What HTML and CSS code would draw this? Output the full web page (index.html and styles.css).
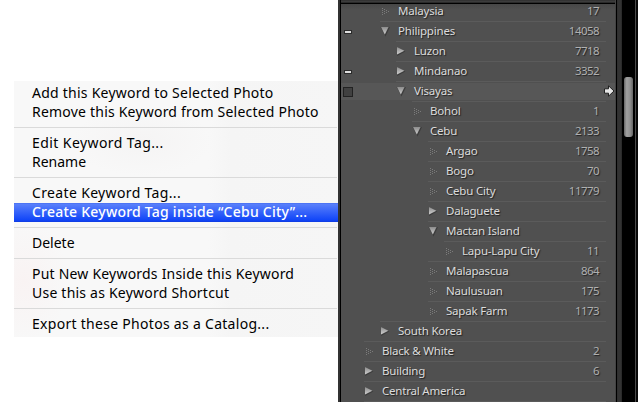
FILE: index.html
```html
<!DOCTYPE html>
<html lang="en">
<head>
<meta charset="utf-8">
<title>Keyword List</title>
<link rel="stylesheet" href="styles.css">
</head>
<body>
<svg class="defs" width="0" height="0">
  <defs>
    <linearGradient id="metal" x1="0" y1="0" x2="0" y2="1"><stop offset="0" stop-color="#8c8c8c"/><stop offset="1" stop-color="#cfcfcf"/></linearGradient>
    <symbol id="open" viewBox="0 0 12 12"><path d="M.5 2h9.5L5.5 11.5z" fill="#333" opacity=".7"/><path d="M1 2h7.6L4.8 9.6z" fill="url(#metal)"/></symbol>
    <symbol id="closed" viewBox="0 0 12 12"><path d="M1 2v9L9.3 6.6z" fill="#333" opacity=".7"/><path d="M1 2v7.6L8.4 5.8z" fill="url(#metal)"/></symbol>
    <symbol id="leaf" viewBox="0 0 12 12"><path d="M2 3h1v1h-1zM2 5h1v1h-1zM2 7h1v1h-1zM2 9h1v1h-1zM4 4h1v1h-1zM4 6h1v1h-1zM4 8h1v1h-1zM6 5h1v1h-1zM6 7h1v1h-1zM8 6h1v1h-1z" fill="#7b7b7b"/></symbol>
  </defs>
</svg>
<div class="screen">
  <div class="menu">
    <div class="item w1">Add this Keyword to Selected Photo</div>
    <div class="item w2">Remove this Keyword from Selected Photo</div>
    <div class="sep"></div>
    <div class="item w3">Edit Keyword Tag...</div>
    <div class="item w4">Rename</div>
    <div class="sep"></div>
    <div class="item w5">Create Keyword Tag...</div>
    <div class="item w6 active">Create Keyword Tag inside “Cebu City”...</div>
    <div class="sep"></div>
    <div class="item w7">Delete</div>
    <div class="sep"></div>
    <div class="item w8">Put New Keywords Inside this Keyword</div>
    <div class="item w9">Use this as Keyword Shortcut</div>
    <div class="sep"></div>
    <div class="item w10">Export these Photos as a Catalog...</div>
  </div>
  <div class="panel">
    <div class="edge"></div>
    <div class="list">
      <div class="row l1 first"><span class="mark"></span><div class="line"><svg><use href="#leaf"/></svg><span class="name">Malaysia</span><span class="count">17</span></div></div>
      <div class="row l1"><span class="mark dash"></span><div class="line"><svg><use href="#open"/></svg><span class="name">Philippines</span><span class="count">14058</span></div></div>
      <div class="row l2"><span class="mark"></span><div class="line"><svg><use href="#closed"/></svg><span class="name">Luzon</span><span class="count">7718</span></div></div>
      <div class="row l2"><span class="mark dash"></span><div class="line"><svg><use href="#closed"/></svg><span class="name">Mindanao</span><span class="count">3352</span></div></div>
      <div class="row l2 hover"><span class="mark box"></span><div class="line"><svg><use href="#open"/></svg><span class="name">Visayas</span></div>
        <svg class="go" viewBox="0 0 11 12"><path d="M.5 3.8h4V.8L10 6l-5.500 5.200v-3h-4z" fill="#e6e6e6" stroke="#222" stroke-width="1"/></svg></div>
      <div class="row l3"><span class="mark"></span><div class="line"><svg><use href="#leaf"/></svg><span class="name">Bohol</span><span class="count">1</span></div></div>
      <div class="row l3"><span class="mark"></span><div class="line"><svg><use href="#open"/></svg><span class="name">Cebu</span><span class="count">2133</span></div></div>
      <div class="row l4"><span class="mark"></span><div class="line"><svg><use href="#leaf"/></svg><span class="name">Argao</span><span class="count">1758</span></div></div>
      <div class="row l4"><span class="mark"></span><div class="line"><svg><use href="#leaf"/></svg><span class="name">Bogo</span><span class="count">70</span></div></div>
      <div class="row l4"><span class="mark"></span><div class="line"><svg><use href="#leaf"/></svg><span class="name">Cebu City</span><span class="count">11779</span></div></div>
      <div class="row l4"><span class="mark"></span><div class="line"><svg><use href="#closed"/></svg><span class="name">Dalaguete</span></div></div>
      <div class="row l4"><span class="mark"></span><div class="line"><svg><use href="#open"/></svg><span class="name">Mactan Island</span></div></div>
      <div class="row l5"><span class="mark"></span><div class="line"><svg><use href="#leaf"/></svg><span class="name">Lapu-Lapu City</span><span class="count">11</span></div></div>
      <div class="row l4"><span class="mark"></span><div class="line"><svg><use href="#leaf"/></svg><span class="name">Malapascua</span><span class="count">864</span></div></div>
      <div class="row l4"><span class="mark"></span><div class="line"><svg><use href="#leaf"/></svg><span class="name">Naulusuan</span><span class="count">175</span></div></div>
      <div class="row l4"><span class="mark"></span><div class="line"><svg><use href="#leaf"/></svg><span class="name">Sapak Farm</span><span class="count">1173</span></div></div>
      <div class="row l1"><span class="mark"></span><div class="line"><svg><use href="#closed"/></svg><span class="name">South Korea</span></div></div>
      <div class="row l0"><span class="mark"></span><div class="line"><svg><use href="#leaf"/></svg><span class="name">Black &amp; White</span><span class="count">2</span></div></div>
      <div class="row l0"><span class="mark"></span><div class="line"><svg><use href="#closed"/></svg><span class="name">Building</span><span class="count">6</span></div></div>
      <div class="row l0"><span class="mark"></span><div class="line"><svg><use href="#closed"/></svg><span class="name">Central America</span></div></div>
      <div class="row l0"><span class="mark"></span><div class="line"></div></div>
    </div>
    <div class="gutter"></div>
    <div class="track"><div class="thumb"></div></div>
    <div class="rim"></div>
  </div>
</div>
</body>
</html>
```
FILE: styles.css
```css
*, *::before { box-sizing: border-box; }
body { margin: 0; background: #fff; overflow: hidden; }
.defs { display: block; height: 0; }
.screen { display: flex; width: 638px; height: 402px; }

.menu {
  width: 324px; height: 256px; margin: 81px 0 0 14px; padding-top: 3px;
  background:
    radial-gradient(ellipse 70px 35px at 128px 60px, #f5f4f4, transparent),
    radial-gradient(ellipse 45px 60px at 10px 200px, #f9f3f3, transparent),
    linear-gradient(90deg, #f8f8f8 0 60%, #f5f5f5 67%, #f6f6f6);
  font: 14px/17px "Noto Sans", "Open Sans", sans-serif;
  color: #000;
}
.item { height: 19px; padding-left: 18px; white-space: nowrap; }
.w1 { letter-spacing: .24px; }
.w2 { letter-spacing: .21px; }
.w3 { letter-spacing: .42px; }
.w5 { letter-spacing: .35px; }
.w6 { letter-spacing: .23px; }
.w8 { letter-spacing: .21px; }
.w9 { letter-spacing: .22px; }
.w10 { letter-spacing: .29px; }
.active {
  color: #fff; font-weight: 500;
  background: linear-gradient(#3f68ed 0, #5a80fb 1px, #1246f8 17px, #0f3be0);
}
.sep { height: 12px; padding-top: 5px; margin-right: 1px; }
.sep::before { content: ""; display: block; height: 1px; background: #dadada; }

.panel { display: flex; width: 300px; height: 402px; background: #505050; }
.edge { width: 3px; background: linear-gradient(90deg, #333 2px, #000 2px); }
.list {
  width: 275px; padding-top: 1px; overflow: hidden;
  border-right: 1px solid #444;
  background: linear-gradient(#333 0 1px, #3c3c3c 1px 2px, #2a2a2a 2px 3px, #000 3px 4px, #474747 4px, #505050 10px);
  font: 11.5px/17px "Noto Sans", "Open Sans", sans-serif;
  color: #dcdcdc; text-shadow: 1px 1px 1px #222;
}
.row { display: flex; height: 20px; align-items: stretch; }
.mark { width: 24px; flex: none; }
.dash::before {
  content: ""; display: block; width: 8px; height: 4px; margin: 9px 0 0 3px;
  background: #dedede; border: 1px solid #2b2b2b;
}
.box::before {
  content: ""; display: block; width: 10px; height: 10px; margin: 6px 0 0 2px;
  background: #414141; border: 1px solid #222;
}
.line { display: flex; width: 241px; border-top: 1px solid #5b5b5b; }
.line svg { width: 12px; height: 12px; margin-top: 3px; flex: none; }
.name { margin-left: 6px; white-space: nowrap; letter-spacing: -.2px; }
.count { margin-left: auto; padding-right: 7px; color: #b0b0b0; letter-spacing: -.55px; }
.first .line { border-color: transparent; }
.l0 .line { margin-left: -1px; width: 242px; }
.l1 .line { margin-left: 15px; width: 226px; }
.l2 .line { margin-left: 31px; width: 210px; }
.l3 .line { margin-left: 47px; width: 194px; }
.l4 .line { margin-left: 63px; width: 178px; }
.l5 .line { margin-left: 79px; width: 162px; }
.hover { background: linear-gradient(transparent 2px, #575757 2px 19px, transparent 19px); }
.go { width: 11px; height: 12px; margin: 4px 0 0 -2px; flex: none; }
.gutter { width: 6px; background: linear-gradient(90deg, #000 1px, #303030 1px 2px, #333 2px 5px, #222); }
.track { width: 13px; padding: 77px 2px 0; background: #000; }
.thumb {
  height: 60px; border-radius: 3px; width: 9px;
  background: linear-gradient(90deg, #666, #a0a0a0 30%, #8e8e8e 70%, #666);
}
.rim { width: 3px; background: linear-gradient(90deg, #4a4a4a 1px, #080808 1px); }
```
